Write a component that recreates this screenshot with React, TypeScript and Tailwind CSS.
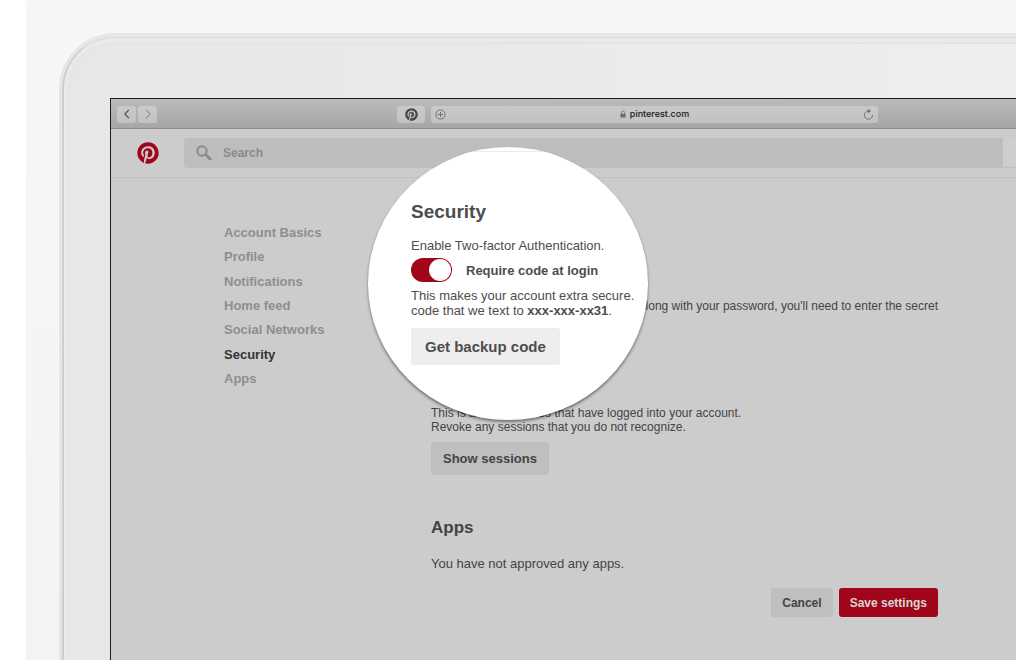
import { FaPinterest } from "react-icons/fa6";

const navItems = [
  "Account Basics",
  "Profile",
  "Notifications",
  "Home feed",
  "Social Networks",
  "Security",
  "Apps",
];

function BrowserBar() {
  const button =
    "flex h-[17px] items-center justify-center rounded-[3px] bg-gradient-to-b from-[#cacaca] to-[#c2c2c2]";
  return (
    <div className="flex h-[30px] items-center border-b border-[#8c8c8c] bg-gradient-to-b from-[#bbbbbb] to-[#a6a6a6] pl-[6px] pr-[138px] pt-px">
      <div className="flex w-[280px] shrink-0 gap-0.5">
        <button aria-label="Back" className={`${button} w-[19px]`}>
          <svg viewBox="0 0 8 12" className="h-2.5 w-2" fill="none" stroke="#4c4c4c" strokeWidth="1.4">
            <path d="M6.2 1 1.5 6l4.7 5" />
          </svg>
        </button>
        <button aria-label="Forward" className={`${button} w-[19px]`}>
          <svg viewBox="0 0 8 12" className="h-2.5 w-2" fill="none" stroke="#8b8b8b" strokeWidth="1.3">
            <path d="m1.8 1 4.7 5-4.7 5" />
          </svg>
        </button>
      </div>
      <button aria-label="Pin it" className={`${button} w-7 shrink-0`}>
        <FaPinterest className="size-[13px] text-[#4a4a4a]" />
      </button>
      <div className="ml-1.5 flex h-[17px] flex-1 items-center rounded-[3px] bg-gradient-to-b from-[#c9c9c9] to-[#c2c2c2] px-1">
        <button aria-label="Add page">
          <svg viewBox="0 0 12 12" className="size-[11px]" fill="none" stroke="#6b6b6b" strokeWidth="1">
            <circle cx="6" cy="6" r="5" />
            <path d="M6 3.2v5.6M3.2 6h5.6" />
          </svg>
        </button>
        <div className="flex flex-1 items-center justify-center gap-1 font-[Inter,sans-serif] text-[9px] font-medium leading-4 text-[#161616]">
          <svg viewBox="0 0 8 10" className="h-2 w-[6px]" aria-hidden="true">
            <path d="M2 5V3a2 2 0 0 1 4 0v2" fill="none" stroke="#6e6e6e" strokeWidth="1.1" />
            <rect x="0.5" y="4.5" width="7" height="5" rx="0.6" fill="#6e6e6e" />
          </svg>
          pinterest.com
        </div>
        <button aria-label="Reload">
          <svg viewBox="0 0 12 12" className="size-[11px]" fill="none" stroke="#6b6b6b" strokeWidth="1">
            <path d="M10.3 6.3A4.4 4.4 0 1 1 6 2.3" />
            <path d="M5.4 0v4.6L8.8 2.3z" fill="#6b6b6b" stroke="none" />
          </svg>
        </button>
      </div>
    </div>
  );
}

function SiteHeader() {
  return (
    <header className="flex h-[49px] items-center border-b border-[#c0c0c0] pl-[26px]">
      <a href="#home" aria-label="Pinterest home">
        <FaPinterest className="size-[22px] text-[#a00519]" />
      </a>
      <label className="ml-[25px] flex h-[30px] flex-1 items-center gap-[11px] rounded-l-sm bg-[#bebebe] pl-3">
        <svg viewBox="0 0 16 16" className="size-4 shrink-0" fill="none" stroke="#8a8a8a" aria-hidden="true">
          <circle cx="6" cy="6" r="4.7" strokeWidth="2" />
          <path d="m9.8 9.8 4.4 4.2" strokeWidth="2.8" strokeLinecap="round" />
        </svg>
        <input
          type="search"
          aria-label="Search"
          placeholder="Search"
          className="min-w-0 flex-1 bg-transparent text-xs font-bold outline-none placeholder:text-[#8a8a8a]"
        />
      </label>
      <div className="h-[29px] w-[13px] border-b border-[#c0c0c0] bg-[#cecece]" />
    </header>
  );
}

function Lens() {
  return (
    <section className="absolute left-[257px] top-[48px] h-[273px] w-[280px] overflow-hidden rounded-[50%] bg-white pl-[43px] text-[13px] leading-[15px] text-[#4d4d4d] shadow-[0_2px_3px_rgba(0,0,0,0.45)]">
      <div className="-ml-[43px] mt-1 h-px bg-[#ececec]" />
      <h2 className="mt-12 text-[19px] font-bold leading-6">Security</h2>
      <p className="mt-[14px]">Enable Two-factor Authentication.</p>
      <label className="mt-[5px] flex h-6 items-center gap-3.5 font-bold">
        <input
          type="checkbox"
          defaultChecked
          className="h-6 w-[41px] appearance-none rounded-full bg-[#a00519] before:ml-[18px] before:mt-px before:block before:size-[22px] before:rounded-full before:bg-white"
        />
        Require code at login
      </label>
      <p className="mt-[6px] whitespace-nowrap">
        This makes your account extra secure.
        <br />
        code that we text to <strong>xxx-xxx-xx31</strong>.
      </p>
      <button className="mt-[10px] h-[37px] rounded-[3px] bg-[#eeeeee] px-3.5 text-[15px] font-bold">
        Get backup code
      </button>
    </section>
  );
}

function Settings() {
  const secondary = "rounded-[3px] bg-[#bfbfbf] font-bold";
  return (
    <main className="flex pl-[113px] pt-[43px]">
      <nav aria-label="Settings" className="w-[207px] shrink-0">
        <ul className="flex h-[170px] flex-col justify-between text-[13px] font-bold leading-6 text-[#8e8e8e]">
          {navItems.map((item) => (
            <li key={item}>
              <a
                href={`#${item.toLowerCase().replace(" ", "-")}`}
                className={item === "Security" ? "text-[#333333]" : ""}
              >
                {item}
              </a>
            </li>
          ))}
        </ul>
      </nav>
      <div className="w-[507px] pt-[78px] text-xs leading-[14px] text-[#444444]">
        <p className="text-right">Along with your password, you'll need to enter the secret</p>
        <section className="pt-[93px]">
          <p>
            This is a list of devices that have logged into your account.
            <br />
            Revoke any sessions that you do not recognize.
          </p>
          <button className={`${secondary} mt-2 h-[33px] px-3 text-[13px]`}>Show sessions</button>
        </section>
        <section className="pt-[41px]">
          <h2 className="text-[17px] font-bold leading-6">Apps</h2>
          <p className="mt-4 text-[13px] leading-4">You have not approved any apps.</p>
        </section>
        <div className="mt-4 flex justify-end gap-1.5 text-xs">
          <button className={`${secondary} h-[29px] px-[11px]`}>Cancel</button>
          <button className="h-[29px] rounded-[3px] bg-[#a00519] px-[11px] font-bold text-[#d6d6d6]">
            Save settings
          </button>
        </div>
      </div>
    </main>
  );
}

export default function App() {
  return (
    <div className="flex h-screen overflow-hidden bg-white pl-[26px] font-['Liberation_Sans',Arial,sans-serif]">
      <div className="flex flex-1 bg-gradient-to-b from-[#f7f7f7] to-[#f3f3f3] pl-[33px] pt-[33px]">
        <div className="flex flex-1 rounded-tl-[56px] bg-[#e6e6e6] pl-[3px] pt-1">
          <div className="flex flex-1 rounded-tl-[52px] border-l-2 border-t border-l-[#cecece] border-t-[#dadada] bg-[#e9e9e9] pl-1 pt-[5px]">
            <div className="flex flex-1 rounded-tl-[46px] border-l border-t border-[#e2e2e2] bg-gradient-to-r from-[#e7e7e7] to-[#eeeeee] pl-[41px] pt-[54px]">
              <div className="relative min-w-0 flex-1 border-l border-t border-[#1c1c1c] bg-[#cccccc]">
                <BrowserBar />
                <SiteHeader />
                <Settings />
                <Lens />
              </div>
            </div>
          </div>
        </div>
      </div>
    </div>
  );
}
